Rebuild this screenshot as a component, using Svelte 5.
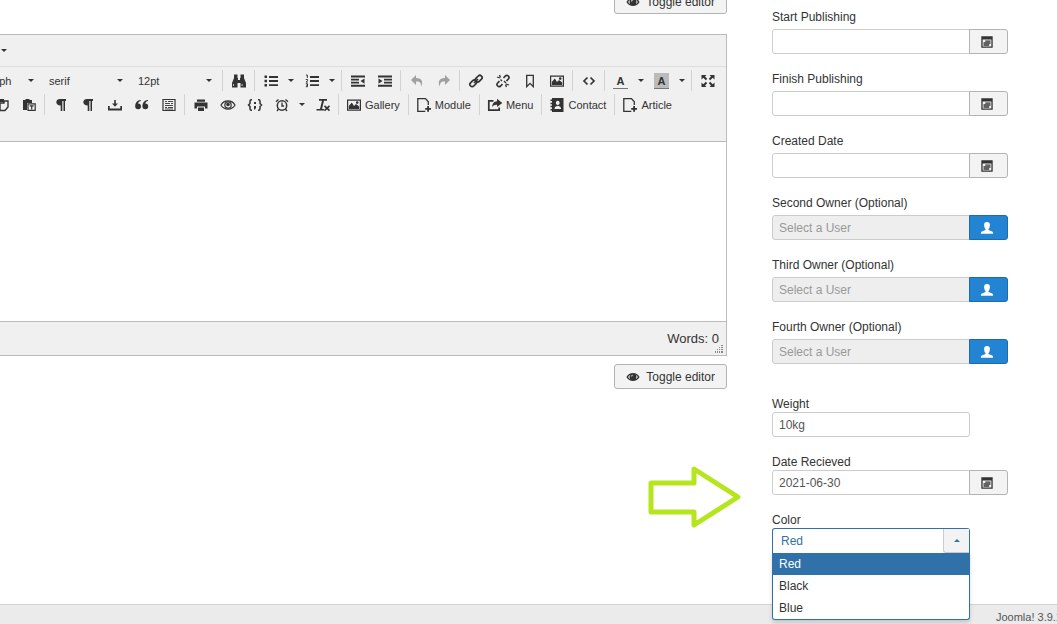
<script>
    const icons = {
        find: '<path d="M3 1.500h3.500v3.500H7v2h2V5h.5V1.500H13V5l2 5v4.500H9.500V10h-3v4.500H1V10l2-5z"/><path d="M2.500 11v2M11 11v2" stroke="#f0f0f0" stroke-width=".8"/>',
        bullist: '<path d="M1.500 2.500H4V5H1.500zM1.500 6.800H4v2.400H1.500zM1.500 11H4v2.500H1.500zM6 3h9v1.900H6zM6 7h9v1.900H6zM6 11.200h9v1.900H6z"/>',
        numlist: '<path d="M6 3h9v1.900H6zM6 7h9v1.900H6zM6 11.200h9v1.900H6z"/><path d="M2 2h1.300v3M1.800 6.500h1.700v1.200L2 9h1.800M1.800 10.700h1.700v3H1.800M2.200 12.200h1.300" fill="none" stroke="currentColor"/>',
        outdent: '<path d="M1 2.500h14v2H1zM1 5.700h8v1.800H1zM1 8.700h8v1.800H1zM1 11.700h14v2H1zM14.500 5.500v5.200L10.500 8z"/>',
        indent: '<path d="M1 2.500h14v2H1zM7 5.700h8v1.800H7zM7 8.700h8v1.800H7zM1 11.700h14v2H1zM1.500 5.500v5.200l4-2.700z"/>',
        undo: '<path d="M7 2v3c5 0 8 3 5 9 .7-4-1.300-6-5-5.500V12L2 7z"/>',
        redo: '<path d="M9 2v3c-5 0-8 3-5 9-.7-4 1.300-6 5-5.500V12l5-5z"/>',
        link: '<g fill="none" stroke="currentColor" stroke-width="1.700"><rect x="7" y="3.500" width="7.500" height="4.500" rx="2.200" transform="rotate(-45 10.700 5.700)"/><rect x="1.500" y="8" width="7.500" height="4.500" rx="2.200" transform="rotate(-45 5.300 10.300)"/><path d="M6 10l4-4"/></g>',
        unlink: '<g fill="none" stroke="currentColor" stroke-width="1.700"><path d="M8.500 5l1.800-2c2.200-1.800 5 .8 3 3L11.500 8M7.500 11l-1.800 2c-2.200 1.800-5-.8-3-3L4.500 8"/><path d="M2 4l3 1M4.500 2l1 2.500M14 12l-3-1M11.500 14l-1-2.500M9 8l2 2M7 8L5.500 6.500" stroke-width="1.300"/></g>',
        bookmark: '<path d="M4.700 2.400h6.600v11.200L8 10.300l-3.300 3.300z" fill="none" stroke="currentColor" stroke-width="1.300"/>',
        image: '<path fill-rule="evenodd" d="M1 2.500h14v11.300H1zM2.200 3.700v8.900h11.600V3.700z"/><path d="M2.800 12V9l3-3.500L8 9l2-2 3.200 2.500V12z"/><circle cx="11.200" cy="5.600" r="1.300"/>',
        code: '<path d="M6.500 4.500L3 8l3.500 3.500M9.500 4.500L13 8l-3.500 3.500" fill="none" stroke="currentColor" stroke-width="1.700"/>',
        fullscreen: '<path d="M1.500 2h5L5 3.500 7.200 5.800 5.800 7.200 3.300 4.800 1.500 6.500zM14.500 2h-5L11 3.500 8.800 5.800l1.400 1.400 2.500-2.400 1.800 1.700zM1.500 14h5L5 12.500l2.200-2.300-1.400-1.400-2.500 2.400-1.800-1.700zM14.500 14h-5l1.500-1.500-2.200-2.300 1.400-1.400 2.500 2.400 1.800-1.700z"/>',
        cut: '<path d="M4 2l5 8M12 2L7 10" stroke="currentColor" stroke-width="1.600"/><circle cx="5" cy="12" r="2"/><circle cx="11" cy="12" r="2"/>',
        paste: '<path d="M4 4H2v8h4M10 4h4v6l-3 3.500H6V6h4z" fill="none" stroke="currentColor" stroke-width="1.400"/><path d="M4 2h6v3H4z"/>',
        pastetext: '<path d="M2 3h2.500V2h4v1H11v3H6v7H2z"/><path d="M7 6.800h7.200v6.600H7z" fill="none" stroke="currentColor" stroke-width="1.200"/><path d="M8.700 8.200h4v1.200h-1.400v3h-1.200v-3H8.700z"/>',
        ltr: '<path d="M7 2h6v2h-1v10h-1.500V4H9.300v10H7.700V8.500C2 8.500 2 2 7 2z"/>',
        download: '<path d="M7.200 3h1.600v3.500H11L8 9.700 5 6.500h2.200z"/><path d="M1 9h1.700v2.600h10.600V9H15v4.500H1z"/>',
        quote: '<path d="M6.800 3C3 3.200 1.200 6 1.200 9.500a2.900 2.900 0 1 0 2.800-3C4.200 5.300 5.200 4.300 6.800 4zM14 3c-3.800.2-5.600 3-5.600 6.500a2.900 2.900 0 1 0 2.800-3c.2-1.200 1.200-2.200 2.800-2.500z"/>',
        form: '<path d="M2 2.500h12v11H2z" fill="none" stroke="currentColor" stroke-width="1.200"/><path d="M4 4.500h2M7 4.500h5M4 6.500h5M10 6.500h2M4 8.500h8M4 10.500h2M7 10.500h5M4 12h8" stroke="currentColor" stroke-width=".9"/>',
        print: '<path d="M4 2.500h8v2.200H4zM1.500 5.500h13v6H12V9.500H4v2H1.500zM5 10.500h6V14H5z"/>',
        eye: '<path d="M1 8c3-5.500 11-5.500 14 0-3 5.500-11 5.500-14 0z" fill="none" stroke="currentColor" stroke-width="1.200"/><circle cx="8" cy="8" r="3.200" fill="none" stroke="currentColor" stroke-width="1.200"/><circle cx="8" cy="7.500" r="1.800"/>',
        braces: '<path d="M5 2.800H4Q3 3 3 4.300V6.500L1.500 8 3 9.500v2.300q0 1.300 1 1.400h1M11 2.800h1q1 .2 1 1.500v2.200L14.500 8 13 9.500v2.300q0 1.300-1 1.400h-1" fill="none" stroke="currentColor" stroke-width="1.500"/><path d="M7 5h2v2H7zM7 9h2v2l-1 1.500H7z"/>',
        clock: '<circle cx="8" cy="8.500" r="4.700" fill="none" stroke="currentColor" stroke-width="1.500"/><path d="M8 5.500V9h2M2 4.700L4.500 2.500M14 4.700l-2.500-2.200M4.500 12L3 14M11.500 12l1.500 2" fill="none" stroke="currentColor" stroke-width="1.300"/>',
        clear: '<path d="M4 2h8v1.800H9L7 12h2v1.600H1.500V12H5l2-8.200H4z"/><path d="M9.500 8.800l5 4.800M14.500 8.800l-5 4.800" stroke="currentColor" stroke-width="1.600"/>',
        page: '<path d="M12.300 8V4.700L9.500 1.600H1.800v12.800h7.500" fill="none" stroke="currentColor" stroke-width="1.300"/><path d="M11.200 9h1.800v2h2v1.800h-2v2h-1.800v-2h-2V11h2z"/>',
        share: '<path d="M6.500 3.800H1.800v9.400h10.400v-2.700" fill="none" stroke="currentColor" stroke-width="1.700"/><path d="M10 1.800L15.300 6 10 10V7.800Q7 7.500 5 10q.5-5.500 5-5.800z"/>',
        contact: '<path fill-rule="evenodd" d="M3 1h11.500v14H3zM8.700 3.800a1.900 2.100 0 1 0 .1 0zM5.500 12h6.500q0-2.800-3.200-3.300-3.300.5-3.300 3.300z"/><path d="M1.500 2.500h2v1.500h-2zM1.500 5.700h2v1.500h-2zM1.500 8.800h2v1.500h-2zM1.500 12h2v1.500h-2z"/>',
        visible: '<path fill-rule="evenodd" d="M.5 8c3-6.200 12-6.200 15 0-3 6.200-12 6.200-15 0zM2.500 8q.8 1.500 2 2.200Q3.600 8 4.500 5.800 3.300 6.500 2.500 8zm11 0q-.8-1.500-2-2.200.9 2.200 0 4.400 1.200-.7 2-2.200zM7.500 5.200Q6 5.600 5.900 7.300h1Q7 6.300 7.800 6z"/>',
        calendar: '<path fill-rule="evenodd" d="M1.500 1.500h13v13h-13zM3 5.200v7.800h10V5.200z"/><path d="M6 6.200h6v1.400H6zM4 8.300h8v1.700H4zM4 10.600h6.500v1.700H4z"/>',
        user: '<path d="M8 1c2.600 0 3.600 1.700 3.300 4Q11 8 9.700 9v1.300l4.300 1.700q1 .5 1 2.500H1q0-2 1-2.500l4.300-1.700V9Q5 8 4.700 5C4.400 2.700 5.400 1 8 1z"/>'
    }

    const historyTools = [
        [{ icon: 'find', label: 'Find and replace' }],
        [{ icon: 'bullist', label: 'Bullet list', menu: true }, { icon: 'numlist', label: 'Numbered list', menu: true }],
        [{ icon: 'outdent', label: 'Decrease indent' }, { icon: 'indent', label: 'Increase indent' }],
        [{ icon: 'undo', label: 'Undo', disabled: true }, { icon: 'redo', label: 'Redo', disabled: true }],
        [{ icon: 'link', label: 'Insert link' }, { icon: 'unlink', label: 'Remove link' }, { icon: 'bookmark', label: 'Anchor' }, { icon: 'image', label: 'Insert image' }],
        [{ icon: 'code', label: 'Source code' }],
        [{ letter: 'fore', label: 'Text color', menu: true }, { letter: 'back', label: 'Background color', menu: true }],
        [{ icon: 'fullscreen', label: 'Fullscreen' }]
    ]

    const insertTools = [
        [{ icon: 'cut', label: 'Cut' }, { icon: 'paste', label: 'Copy' }, { icon: 'pastetext', label: 'Paste as text' }],
        [{ icon: 'ltr', label: 'Left to right' }, { icon: 'ltr', label: 'Right to left' }, { icon: 'download', label: 'Nonbreaking space' }, { icon: 'quote', label: 'Blockquote' }, { icon: 'form', label: 'Template' }],
        [{ icon: 'print', label: 'Print' }, { icon: 'eye', label: 'Preview' }, { icon: 'braces', label: 'Code sample' }, { icon: 'clock', label: 'Insert date/time', menu: true }, { icon: 'clear', label: 'Clear formatting' }],
        [{ icon: 'image', text: 'Gallery' }],
        [{ icon: 'page', text: 'Module' }],
        [{ icon: 'share', text: 'Menu' }],
        [{ icon: 'contact', text: 'Contact' }],
        [{ icon: 'page', text: 'Article' }]
    ]

    const formats = [
        { label: 'Block format', options: ['Paragraph', 'Heading 1', 'Heading 2'] },
        { label: 'Font family', options: ['serif', 'sans-serif', 'monospace'] },
        { label: 'Font size', options: ['12pt', '14pt', '18pt'] }
    ]

    const dates = ['Start Publishing', 'Finish Publishing', 'Created Date']
    const owners = ['Second Owner (Optional)', 'Third Owner (Optional)', 'Fourth Owner (Optional)']
    const colors = ['Red', 'Black', 'Blue']

    let weight = $state('10kg')
    let received = $state('2021-06-30')
    let color = $state('Red')
    let open = $state(true)
    let showEditor = $state(true)

    const toId = (text) => text.toLowerCase().replace(/[^a-z]+/g, '-')

    const pick = (value) => {
        color = value
        open = false
    }
</script>

{#snippet icon(name)}
    <svg class="icon" viewBox="0 0 16 16" fill="currentColor" aria-hidden="true">{@html icons[name]}</svg>
{/snippet}

{#snippet caret()}
    <svg class="caret" viewBox="0 0 6 3" aria-hidden="true"><path d="M0 0h6L3 3z" fill="currentColor" /></svg>
{/snippet}

{#snippet toolGroups(groups)}
    {#each groups as group}
        <div class="group">
            {#each group as tool}
                <button type="button" class="tool" class:labelled={tool.text} disabled={tool.disabled} aria-label={tool.label}>
                    {#if tool.letter}
                        <span class="letter {tool.letter}">A</span>
                    {:else}
                        {@render icon(tool.icon)}
                    {/if}
                    {#if tool.text}{tool.text}{/if}
                </button>
                {#if tool.menu}
                    <button type="button" class="more" aria-label="{tool.label} options">{@render caret()}</button>
                {/if}
            {/each}
        </div>
    {/each}
{/snippet}

{#snippet toggle()}
    <button type="button" class="toggle" onclick={() => (showEditor = !showEditor)}>
        {@render icon('visible')}Toggle editor
    </button>
{/snippet}

<div class="page">
    <div class="content">
        <main>
            {@render toggle()}
            <div class="editor">
                <div class="menubar">
                    <button type="button" class="more" aria-label="Tools menu">{@render caret()}</button>
                </div>
                <div class="toolbar">
                    <div class="row formats">
                        {#each formats as format}
                            <div class="format">
                                <select aria-label={format.label}>
                                    {#each format.options as option}
                                        <option>{option}</option>
                                    {/each}
                                </select>
                                {@render caret()}
                            </div>
                        {/each}
                        <div class="groups">{@render toolGroups(historyTools)}</div>
                    </div>
                    <div class="row inserts">{@render toolGroups(insertTools)}</div>
                </div>
                <div class="text" contenteditable={showEditor} role="textbox" tabindex="0" aria-label="Article text"></div>
                <div class="status">
                    <span>Words: 0</span>
                    <svg class="grip" viewBox="0 0 8 8" aria-hidden="true">
                        <path d="M6 0h2v1H6zM4 2h1v1H4zM6 2h2v1H6zM2 4h1v1H2zM4 4h1v1H4zM6 4h2v1H6zM0 6h1v2H0zM2 6h1v2H2zM4 6h1v2H4zM6 6h2v2H6z" />
                    </svg>
                </div>
            </div>
            {@render toggle()}
            <svg class="arrow" viewBox="0 0 96 68" aria-hidden="true">
                <path d="M4 20h43V6l44 28-44 28V49H4z" />
            </svg>
        </main>

        <aside>
            <div class="fields">
                {#each dates as label}
                    <div class="field">
                        <label for={toId(label)}>{label}</label>
                        <div class="control">
                            <input type="text" id={toId(label)} />
                            <button type="button" class="addon" aria-label="Open the calendar">{@render icon('calendar')}</button>
                        </div>
                    </div>
                {/each}
                {#each owners as label}
                    <div class="field">
                        <label for={toId(label)}>{label}</label>
                        <div class="control">
                            <input type="text" id={toId(label)} placeholder="Select a User" readonly />
                            <button type="button" class="addon primary" aria-label="Select a user">{@render icon('user')}</button>
                        </div>
                    </div>
                {/each}
            </div>

            <div class="fields custom">
                <div class="field">
                    <label for="weight">Weight</label>
                    <div class="control"><input type="text" id="weight" bind:value={weight} /></div>
                </div>
                <div class="field">
                    <label for="received">Date Recieved</label>
                    <div class="control">
                        <input type="text" id="received" bind:value={received} />
                        <button type="button" class="addon" aria-label="Open the calendar">{@render icon('calendar')}</button>
                    </div>
                </div>
                <div class="field">
                    <label for="color">Color</label>
                    <div class="chosen" class:open>
                        <button type="button" id="color" class="single" aria-haspopup="listbox" aria-expanded={open} onclick={() => (open = !open)}>
                            <span>{color}</span>
                            <span class="handle">{@render caret()}</span>
                        </button>
                        {#if open}
                            <div class="options" role="listbox" aria-label="Color">
                                {#each colors as option}
                                    <button type="button" role="option" aria-selected={option === color} onclick={() => pick(option)}>{option}</button>
                                {/each}
                            </div>
                        {/if}
                    </div>
                </div>
            </div>
        </aside>
    </div>

    <footer><span>Joomla! 3.9.1</span></footer>
</div>

<style>
    :global(body) {
        margin: 0;
        background: #fff;
    }

    .page {
        display: flex;
        flex-direction: column;
        height: 100vh;
        overflow: hidden;
        color: #333;
        font: 12px/16px 'Liberation Sans', Arial, sans-serif;
    }

    .page * {
        box-sizing: border-box;
    }

    button, input, select {
        margin: 0;
        padding: 0;
        border: 0;
        background: none;
        color: inherit;
        font: inherit;
        outline: 0;
    }

    .content {
        display: grid;
        grid-template-columns: minmax(0, 1fr) 285px;
        column-gap: 45px;
        flex: 1;
        min-height: 0;
    }

    main {
        position: relative;
        display: flex;
        flex-direction: column;
        align-items: flex-end;
        margin-top: -11px;
    }

    .icon {
        flex: none;
        width: 16px;
        height: 16px;
    }

    .caret {
        flex: none;
        width: 6px;
        height: 3px;
    }

    .toggle {
        display: flex;
        align-items: center;
        gap: 6px;
        height: 25px;
        padding: 0 11px;
        border: 1px solid #b3b3b3;
        border-radius: 3px;
        background: #f3f3f3;
    }

    .toggle .icon {
        width: 14px;
        height: 14px;
    }

    .editor {
        align-self: stretch;
        margin: 20px 0 8px;
        border: solid #bbb;
        border-width: 1px 1px 1px 0;
        background: #f0f0f0;
        overflow: hidden;
    }

    .menubar {
        display: flex;
        height: 32px;
        border-bottom: 1px solid #ddd;
    }

    .menubar .more {
        width: 7px;
        justify-content: flex-end;
    }

    .toolbar {
        height: 75px;
        padding-top: 3px;
        border-bottom: 1px solid #bbb;
        font-size: 11px;
    }

    .row {
        display: flex;
        height: 24px;
    }

    .groups {
        display: flex;
        margin-left: 2px;
    }

    /* the start of both rows is scrolled out of view */
    .formats {
        margin-left: -47px;
    }

    .inserts {
        margin-left: -42px;
    }

    .format {
        display: flex;
        align-items: center;
        width: 89px;
        height: 21px;
    }

    .format select {
        flex: 1;
        min-width: 0;
        padding-left: 7px;
        appearance: none;
    }

    .format .caret {
        margin-right: 8px;
    }

    .group {
        display: flex;
        height: 21px;
        padding: 0 2px;
        border-left: 1px solid #d2d2d2;
    }

    .inserts .group:first-child {
        border-color: transparent;
    }

    .tool {
        display: flex;
        align-items: center;
        justify-content: center;
        width: 27px;
    }

    .tool:disabled {
        color: #a0a0a0;
    }

    .tool.labelled {
        gap: 3px;
        width: auto;
        padding: 0 6px 0 5px;
    }

    .more {
        display: flex;
        align-items: center;
        justify-content: center;
        width: 14px;
    }

    .letter {
        width: 15px;
        height: 16px;
        border-bottom: 1px solid #777;
        font-weight: bold;
        text-align: center;
    }

    .letter.back {
        background: #bbb;
    }

    .text {
        height: 179px;
        background: #fff;
        outline: 0;
    }

    .status {
        display: flex;
        justify-content: flex-end;
        align-items: flex-end;
        height: 34px;
        padding: 0 3px 2px 0;
        border-top: 1px solid #bbb;
        font-size: 13px;
    }

    .status span {
        margin-right: -4px;
        padding-bottom: 6px;
    }

    .grip {
        width: 8px;
        height: 8px;
        fill: #888;
    }

    .arrow {
        position: absolute;
        top: 474px;
        right: -16px;
        width: 96px;
        height: 68px;
        fill: none;
        stroke: #b5e61d;
        stroke-width: 5;
        stroke-linejoin: round;
    }

    aside {
        padding-top: 9px;
    }

    .fields {
        display: flex;
        flex-direction: column;
        gap: 17px;
        width: 236px;
    }

    .fields.custom {
        margin-top: 32px;
    }

    .field {
        display: flex;
        flex-direction: column;
        gap: 4px;
    }

    .custom .field {
        gap: 0;
    }

    .control {
        display: flex;
        height: 25px;
    }

    .control input {
        width: 198px;
        padding: 0 6px;
        border: 1px solid #ccc;
        border-radius: 3px;
        color: #555;
    }

    .control input:not(:last-child) {
        border-radius: 3px 0 0 3px;
    }

    .control input:read-only {
        background: #eee;
    }

    .control input::placeholder {
        color: #999;
    }

    .addon {
        display: flex;
        align-items: center;
        justify-content: center;
        width: 39px;
        margin-left: -1px;
        padding-right: 3px;
        border: 1px solid #b3b3b3;
        border-radius: 0 3px 3px 0;
        background: #f3f3f3;
    }

    .addon .icon {
        width: 14px;
        height: 14px;
    }

    .addon.primary {
        border-color: #1c6cab;
        background: #2384d3;
        color: #fff;
    }

    .chosen {
        position: relative;
        width: 198px;
    }

    .single {
        display: flex;
        align-items: stretch;
        justify-content: space-between;
        width: 100%;
        height: 25px;
        padding-left: 8px;
        border: 1px solid #3071a9;
        border-radius: 3px;
        color: #3071a9;
        line-height: 24px;
    }

    .open .single {
        border-bottom: 0;
        border-radius: 3px 3px 0 0;
    }

    .handle {
        display: flex;
        align-items: center;
        justify-content: center;
        width: 26px;
        border: solid #ccc;
        border-width: 0 0 1px 1px;
        border-radius: 0 0 0 3px;
        background: #f3f3f3;
    }

    .open .handle .caret {
        transform: rotate(180deg);
    }

    .options {
        position: absolute;
        top: 100%;
        left: 0;
        right: 0;
        display: flex;
        flex-direction: column;
        border: 1px solid #3071a9;
        border-top: 0;
        border-radius: 0 0 3px 3px;
        background: #fff;
        box-shadow: 0 3px 4px rgba(0, 0, 0, .15);
    }

    .options button {
        height: 22px;
        padding: 0 6px;
        text-align: left;
    }

    .options button[aria-selected='true'] {
        background: #3071a9;
        color: #fff;
    }

    footer {
        display: flex;
        justify-content: flex-end;
        height: 20px;
        padding-top: 4px;
        border-top: 1px solid #d4d4d4;
        background: #ebebeb;
        color: #555;
        font-size: 11px;
        white-space: nowrap;
    }

    footer span {
        margin-right: -5px;
    }
</style>
